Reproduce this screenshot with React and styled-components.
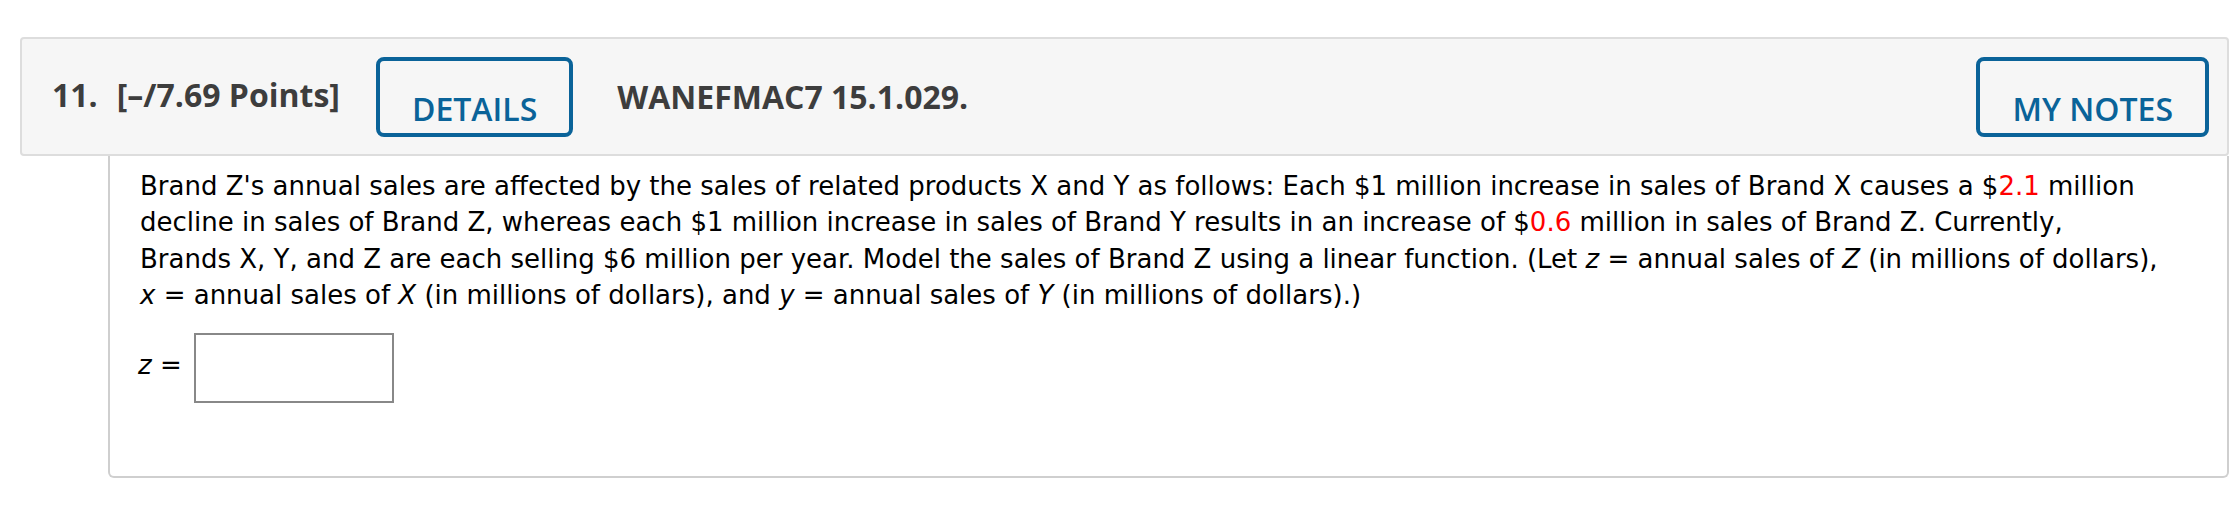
import React from "react";
import styled, { createGlobalStyle } from "styled-components";

const GlobalStyle = createGlobalStyle`
  html, body {
    margin: 0;
    padding: 0;
    background: #ffffff;
  }
  body {
    font-family: "DejaVu Sans", Verdana, sans-serif;
  }
`;

const Page = styled.div`
  padding: 37px 11px 0 20px;
`;

const Header = styled.div`
  display: flex;
  align-items: center;
  background: #f6f6f6;
  border: 2px solid #dddddd;
  border-radius: 4px;
  padding: 18px 18px 17px 30px;
  font-family: "Open Sans", "Liberation Sans", sans-serif;
  color: #3d3d3d;
`;

const HeadText = styled.span`
  font-weight: 700;
  font-size: 32px;
  line-height: 44px;
  white-space: nowrap;
  margin-left: ${(p) => p.$gap || 0}px;
  margin-bottom: ${(p) => p.$lift || 0}px;
`;

const OutlineButton = styled.button`
  box-sizing: border-box;
  height: 80px;
  border: 4px solid #0a6399;
  border-radius: 8px;
  background: transparent;
  color: #0a6399;
  font-family: "Open Sans", "Liberation Sans", sans-serif;
  font-weight: 600;
  font-size: 32px;
  line-height: 44px;
  padding: 26px 32px 2px;
  white-space: nowrap;
  cursor: pointer;
  margin-left: ${(p) => (p.$push ? "auto" : `${p.$gap || 0}px`)};
`;

const Body = styled.div`
  margin-left: 88px;
  border: 2px solid #cfcfcf;
  border-top: none;
  border-radius: 0 0 6px 6px;
  padding: 12px 30px 73px 30px;
`;

const Question = styled.p`
  margin: 0;
  font-size: 26px;
  line-height: 36.4px;
  color: #000000;
`;

const Line = styled.span`
  display: block;
  white-space: nowrap;
`;

const Highlight = styled.span`
  color: #ff0000;
`;

const Var = styled.i`
  font-style: italic;
`;

const AnswerRow = styled.div`
  display: flex;
  align-items: center;
  margin-top: 19px;
`;

const Label = styled.span`
  font-size: 26px;
  color: #000000;
  margin-left: -2px;
  margin-bottom: 6px;
  white-space: nowrap;
`;

const AnswerInput = styled.input`
  box-sizing: border-box;
  width: 200px;
  height: 70px;
  margin-left: 12px;
  border: 2px solid #888888;
  border-radius: 0;
  padding: 0 8px;
  font-family: "DejaVu Sans", Verdana, sans-serif;
  font-size: 26px;
  background: #ffffff;
  outline: none;
`;

export default function App() {
  return (
    <>
      <GlobalStyle />
      <Page>
        <Header>
          <HeadText $lift={4}>11.</HeadText>
          <HeadText $gap={19} $lift={4}>[–/7.69 Points]</HeadText>
          <OutlineButton $gap={36}>DETAILS</OutlineButton>
          <HeadText $gap={44}>WANEFMAC7 15.1.029.</HeadText>
          <OutlineButton $push>MY NOTES</OutlineButton>
        </Header>
        <Body>
          <Question>
            <Line>
              Brand Z's annual sales are affected by the sales of related products X and Y as
              follows: Each $1 million increase in sales of Brand X causes a $
              <Highlight>2.1</Highlight> million
            </Line>
            <Line>
              decline in sales of Brand Z, whereas each $1 million increase in sales of Brand Y
              results in an increase of $<Highlight>0.6</Highlight> million in sales of Brand Z.
              Currently,
            </Line>
            <Line>
              Brands X, Y, and Z are each selling $6 million per year. Model the sales of Brand Z
              using a linear function. (Let <Var>z</Var> = annual sales of <Var>Z</Var> (in
              millions of dollars),
            </Line>
            <Line>
              <Var>x</Var> = annual sales of <Var>X</Var> (in millions of dollars), and{" "}
              <Var>y</Var> = annual sales of <Var>Y</Var> (in millions of dollars).)
            </Line>
          </Question>
          <AnswerRow>
            <Label>
              <Var>z</Var> =
            </Label>
            <AnswerInput type="text" aria-label="z" />
          </AnswerRow>
        </Body>
      </Page>
    </>
  );
}
